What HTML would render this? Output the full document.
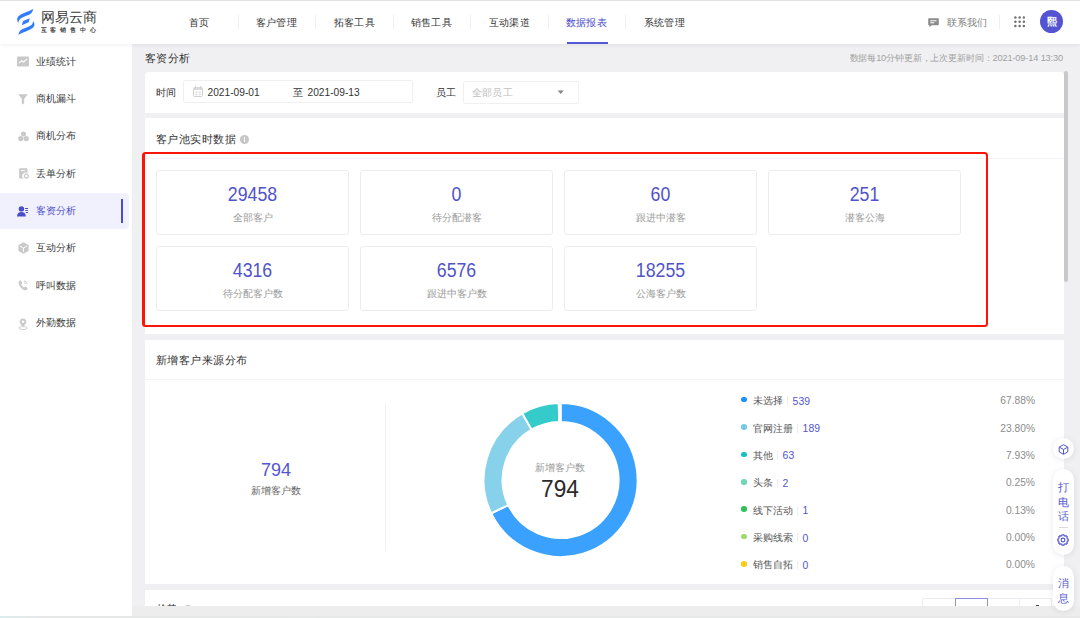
<!DOCTYPE html>
<html lang="zh">
<head>
<meta charset="utf-8">
<title>客资分析</title>
<style>
*{box-sizing:border-box;margin:0;padding:0}
html,body{width:1080px;height:618px;overflow:hidden;background:#f0f0f2}
body{position:relative;font-family:"Liberation Sans",sans-serif;font-size:10px;color:#333;-webkit-font-smoothing:antialiased}
.abs{position:absolute}
.t{position:absolute;white-space:nowrap;line-height:14px;height:14px}
.c{text-align:center}
.r{text-align:right}
/* header */
#hdr{position:absolute;left:0;top:0;width:1080px;height:43.5px;background:#fff;box-shadow:0 1px 4px rgba(0,0,0,.07);z-index:5}
#topline{position:absolute;left:0;top:0;width:1080px;height:1px;background:#e2e2e2;z-index:6}
.nav{position:absolute;top:15.9px;width:77px;text-align:center;font-size:10.2px;letter-spacing:.3px;color:#333;line-height:14px;white-space:nowrap}
.sep{position:absolute;top:15px;width:1px;height:14px;background:#f0f0f0}
/* sidebar */
#side{position:absolute;left:0;top:43px;width:132.2px;height:575px;background:#fff}
.si{position:absolute;left:36px;font-size:10.2px;letter-spacing:.1px;color:#3a3a3a;line-height:14px;white-space:nowrap}
/* panels */
.panel{position:absolute;left:144.6px;width:919.4px;background:#fff}
.card{position:absolute;width:193px;height:65px;border:1px solid #ededf0;border-radius:3px;background:#fff}
.num{position:absolute;left:0;width:100%;text-align:center;top:12.9px;font-size:19.3px;line-height:22px;color:#5053c9;transform:scaleX(.92)}
.lab{position:absolute;left:0;width:100%;text-align:center;top:39.5px;font-size:10.2px;line-height:13px;color:#9a9a9a;white-space:nowrap}
.lg{position:absolute;left:753px;font-size:9.6px;line-height:14px;color:#555;white-space:nowrap}
.lgn{position:absolute;margin-left:-.4px;font-size:10.4px;line-height:14px;color:#5356cf;white-space:nowrap}
.lgs{position:absolute;width:1px;height:9px;background:#eeeeee}
.dot{position:absolute;left:741.2px;width:5.6px;height:5.6px;border-radius:50%;margin-top:-.3px}
.pct{position:absolute;left:960px;width:75px;text-align:right;font-size:10.25px;line-height:14px;color:#8c8c8c;white-space:nowrap}
</style>
</head>
<body>

<!-- ================= SIDEBAR ================= -->
<div id="side">
  <div class="abs" style="left:0;top:150px;width:128.7px;height:36px;background:#f1f1fd;border-radius:0 4px 4px 0"></div>
  <div class="abs" style="left:120.7px;top:155.8px;width:2.1px;height:24px;background:#4a4cc9"></div>
  <!-- sidebar icons -->
  <svg class="abs" style="left:17px;top:13px" width="12" height="11" viewBox="0 0 12 11"><rect x="0" y="0.5" width="12" height="10" rx="1.3" fill="#c9c9c9"/><path d="M2 7.2L4.6 4.6L6.6 6L10 3.2" fill="none" stroke="#fff" stroke-width="1.1"/></svg>
  <svg class="abs" style="left:18px;top:51px" width="10" height="11" viewBox="0 0 10 11"><path d="M0.2 0.3H9.8L6.2 4.8V9.2L3.8 10.6V4.8Z" fill="#c9c9c9"/></svg>
  <svg class="abs" style="left:17.5px;top:88px" width="11" height="11" viewBox="0 0 11 11" fill="#c9c9c9"><circle cx="5.5" cy="2.9" r="2.5"/><circle cx="2.8" cy="7.6" r="2.6"/><circle cx="8.2" cy="7.6" r="2.6"/></svg>
  <svg class="abs" style="left:18.5px;top:124.8px" width="10" height="11" viewBox="0 0 10 11"><path d="M1 0.3H7.6A.8.8 0 0 1 8.4 1.1V5.2A3 3 0 0 0 4.6 10.6H1A.8.8 0 0 1 .2 9.8V1.1A.8.8 0 0 1 1 .3Z" fill="#c9c9c9"/><rect x="1.8" y="2.2" width="4.2" height="1" fill="#fff"/><circle cx="7.3" cy="8.1" r="2" fill="none" stroke="#c9c9c9" stroke-width="1.2"/></svg>
  <svg class="abs" style="left:17px;top:162.5px" width="11" height="11" viewBox="0 0 11 11" fill="#4a4cc9"><circle cx="4.4" cy="2.9" r="2.7"/><path d="M0 10.4C0 7.4 1.8 6 4.4 6S8.8 7.4 8.8 10.4Z"/><rect x="8" y="2" width="3" height="1"/><rect x="8.4" y="4" width="2.6" height="1"/><rect x="8.8" y="6" width="2.2" height="1"/></svg>
  <svg class="abs" style="left:17.5px;top:199px" width="11" height="12" viewBox="0 0 11 12"><path d="M5.5 0.3L10.6 3.1V8.9L5.5 11.7L0.4 8.9V3.1Z" fill="#c9c9c9"/><path d="M2 4L5.5 6L9 4M5.5 6V9.8" fill="none" stroke="#fff" stroke-width="1"/></svg>
  <svg class="abs" style="left:17.5px;top:236.5px" width="10" height="11" viewBox="0 0 10 11"><path d="M1.9 0.6C2.4 0.3 2.9 0.4 3.2 0.9L4.1 2.5C4.4 3 4.2 3.5 3.8 3.8L3.2 4.3C3.6 5.6 4.7 6.9 6 7.5L6.6 6.9C7 6.5 7.5 6.5 7.9 6.8L9.3 7.8C9.8 8.2 9.8 8.7 9.4 9.2C8.5 10.3 7.2 10.6 5.8 9.9C3.2 8.7 1.2 6 0.6 3.3C0.4 2.2 0.9 1.2 1.9 0.6Z" fill="#c9c9c9"/><path d="M6 0.9A3.3 3.3 0 0 1 9.2 4.1M6 2.7A1.5 1.5 0 0 1 7.5 4.1" fill="none" stroke="#c9c9c9" stroke-width=".9"/></svg>
  <svg class="abs" style="left:18px;top:274.5px" width="10" height="12" viewBox="0 0 10 12"><ellipse cx="5" cy="10" rx="4.2" ry="1.5" fill="none" stroke="#c9c9c9" stroke-width=".9"/><path d="M5 0.3A3.5 3.5 0 0 1 8.5 3.8C8.5 6 5 9.6 5 9.6S1.5 6 1.5 3.8A3.5 3.5 0 0 1 5 .3Z" fill="#c9c9c9" stroke="#fff" stroke-width=".5"/><circle cx="5" cy="3.8" r="1.3" fill="#fff"/></svg>
  <div class="si" style="top:12.1px">业绩统计</div>
  <div class="si" style="top:49.1px">商机漏斗</div>
  <div class="si" style="top:86.1px">商机分布</div>
  <div class="si" style="top:124.1px">丢单分析</div>
  <div class="si" style="top:161.1px;color:#4a4cc9">客资分析</div>
  <div class="si" style="top:198.1px">互动分析</div>
  <div class="si" style="top:236.1px">呼叫数据</div>
  <div class="si" style="top:273.1px">外勤数据</div>
</div>

<!-- ================= HEADER ================= -->
<div id="topline"></div>
<div id="hdr">
  <div class="nav" style="left:161px">首页</div>
  <div class="nav" style="left:238px">客户管理</div>
  <div class="nav" style="left:316px">拓客工具</div>
  <div class="nav" style="left:393px">销售工具</div>
  <div class="nav" style="left:471px">互动渠道</div>
  <div class="nav" style="left:548px;color:#4a4cc9">数据报表</div>
  <div class="nav" style="left:626px">系统管理</div>
  <div class="sep" style="left:238px"></div>
  <div class="sep" style="left:315px"></div>
  <div class="sep" style="left:393px"></div>
  <div class="sep" style="left:470px"></div>
  <div class="sep" style="left:548px"></div>
  <div class="sep" style="left:625px"></div>
  <div class="abs" style="left:567.2px;top:41.9px;width:40.4px;height:1.7px;background:#5558d6"></div>
  <!-- logo -->
  <svg class="abs" style="left:0;top:0" width="44" height="43" viewBox="0 0 44 43">
    <g fill="#2f7dff">
      <path d="M33.3 9.1C31 10.4 26 12.3 23.65 13.3C20.5 14.6 17.8 16 17.2 18.5C17 20.2 17.6 21.8 18.4 22.9C18.4 21 19.6 19.2 21.3 18C24 16.4 27.5 15.4 29.5 14.5C31.8 13.4 32.6 11.5 33.3 9.1Z"/>
      <path d="M33.3 9.1C31 10.4 26 12.3 23.65 13.3C20.5 14.6 17.8 16 17.2 18.5C17 20.2 17.6 21.8 18.4 22.9C18.4 21 19.6 19.2 21.3 18C24 16.4 27.5 15.4 29.5 14.5C31.8 13.4 32.6 11.5 33.3 9.1Z" transform="rotate(180 25.8 21.9)"/>
      <path d="M29.8 18.3L23.1 20.9L21.8 25.3L28.6 22.3Z"/>
    </g>
  </svg>
  <div class="abs" style="left:40.5px;top:8px;width:58px;height:18px;line-height:18px;font-size:14px;font-weight:500;color:#3a3a3a;white-space:nowrap;overflow:hidden">网易云商</div>
  <div class="abs" style="left:40.5px;top:26px;width:60px;height:8px;line-height:8px;font-size:6px;font-weight:bold;letter-spacing:3.9px;color:#444;white-space:nowrap;overflow:hidden">互客销售中心</div>
  <!-- header right -->
  <svg class="abs" style="left:927.5px;top:17.6px" width="11" height="10" viewBox="0 0 11 10"><path d="M1 .3h9a.8.8 0 0 1 .8.8v5.3a.8.8 0 0 1-.8.8H3.6L1.4 9.2V7.2H1a.8.8 0 0 1-.8-.8V1.1A.8.8 0 0 1 1 .3z" fill="#8c8c8c"/><rect x="2.3" y="2.3" width="6.2" height="1" fill="#fff"/><rect x="2.3" y="4.3" width="3.8" height="1" fill="#fff"/></svg>
  <div class="t" style="left:947px;top:16.3px;font-size:10.2px;letter-spacing:.15px;color:#7c7c7c">联系我们</div>
  <div class="sep" style="left:999px"></div>
  <svg class="abs" style="left:1014.2px;top:16.4px" width="11.3" height="11.3" viewBox="0 0 11.3 11.3" fill="#707070"><circle cx="1.4" cy="1.4" r="1.25"/><circle cx="5.65" cy="1.4" r="1.25"/><circle cx="9.9" cy="1.4" r="1.25"/><circle cx="1.4" cy="5.65" r="1.25"/><circle cx="5.65" cy="5.65" r="1.25"/><circle cx="9.9" cy="5.65" r="1.25"/><circle cx="1.4" cy="9.9" r="1.25"/><circle cx="5.65" cy="9.9" r="1.25"/><circle cx="9.9" cy="9.9" r="1.25"/></svg>
  <div class="abs" style="left:1039.8px;top:10.3px;width:23.2px;height:23.2px;border-radius:50%;background:#5454d2"></div>
  <div class="t c" style="left:1040px;width:23px;top:15.2px;font-size:10px;font-weight:bold;color:#fff">熙</div>
</div>

<!-- ================= MAIN ================= -->
<div class="t" style="left:145px;top:51.3px;font-size:11.4px;letter-spacing:.45px;color:#333">客资分析</div>
<div class="t r" style="left:760px;width:303px;top:51px;font-size:9.2px;letter-spacing:-.13px;color:#a0a0a0">数据每10分钟更新，上次更新时间：2021-09-14 13:30</div>

<!-- filter panel -->
<div class="panel" style="top:72px;height:41px;border-radius:4px 4px 0 0">
</div>
<div class="t" style="left:155.5px;top:85.8px;font-size:10.4px;color:#333">时间</div>
<div class="abs" style="left:183px;top:80px;width:230px;height:23px;border:1px solid #f0f0f1;border-radius:2px;background:#fff"></div>
<svg class="abs" style="left:193px;top:86px" width="10" height="11" viewBox="0 0 10 11"><rect x="0.5" y="1.6" width="9" height="8.9" rx="1" fill="#fff" stroke="#d2d2d2"/><rect x="0.5" y="1.6" width="9" height="2.4" fill="#dcdcdc"/><rect x="2" y="0" width="1" height="3" fill="#cfcfcf"/><rect x="7" y="0" width="1" height="3" fill="#cfcfcf"/><path d="M3.4 5v5M6.6 5v5" stroke="#e2e2e2" stroke-width=".8"/><path d="M1.8 6.2h6.4M1.8 8.3h6.4" stroke="#d6d6d6" stroke-width=".9" stroke-dasharray="1.2 1.4"/></svg>
<div class="t" style="left:207.5px;top:85.8px;font-size:10.2px;color:#333">2021-09-01</div>
<div class="t" style="left:293px;top:85.8px;font-size:10.2px;color:#333">至</div>
<div class="t" style="left:307.5px;top:85.8px;font-size:10.2px;color:#333">2021-09-13</div>
<div class="t" style="left:436px;top:85.8px;font-size:10.4px;color:#333">员工</div>
<div class="abs" style="left:463px;top:81px;width:116px;height:23px;border:1px solid #f0f0f1;border-radius:2px;background:#fff"></div>
<div class="t" style="left:472px;top:86.4px;font-size:9.8px;letter-spacing:.2px;color:#c0c0c0">全部员工</div>
<svg class="abs" style="left:556.5px;top:90px" width="8" height="5" viewBox="0 0 8 5"><path d="M0.6 0.5H6.8L3.7 4.1Z" fill="#858585"/></svg>

<!-- section 1 -->
<div class="panel" style="top:118px;height:215.5px"></div>
<div class="t" style="left:156px;top:132px;font-size:11.4px;letter-spacing:.45px;color:#333">客户池实时数据</div>
<div class="abs" style="left:239.8px;top:134.8px;width:8.9px;height:8.9px;border-radius:50%;background:#c6c6c6"></div>
<div class="abs" style="left:243.6px;top:137px;width:1.2px;height:4.6px;background:#fff"></div>
<div class="abs" style="left:145px;top:158px;width:919px;height:1px;background:#f3f3f5"></div>

<div class="card" style="left:156px;top:170px"><div class="num">29458</div><div class="lab">全部客户</div></div>
<div class="card" style="left:360px;top:170px"><div class="num">0</div><div class="lab">待分配潜客</div></div>
<div class="card" style="left:564px;top:170px"><div class="num">60</div><div class="lab">跟进中潜客</div></div>
<div class="card" style="left:768px;top:170px"><div class="num">251</div><div class="lab">潜客公海</div></div>
<div class="card" style="left:156px;top:246px"><div class="num">4316</div><div class="lab">待分配客户数</div></div>
<div class="card" style="left:360px;top:246px"><div class="num">6576</div><div class="lab">跟进中客户数</div></div>
<div class="card" style="left:564px;top:246px"><div class="num">18255</div><div class="lab">公海客户数</div></div>

<!-- red highlight box -->
<div class="abs" style="left:142px;top:151.8px;width:846px;height:175.2px;border:2.2px solid #fb1409;border-left-width:3px;border-radius:3.5px"></div>

<!-- section 2 -->
<div class="panel" style="top:340px;height:244.2px"></div>
<div class="t" style="left:156px;top:353px;font-size:11.4px;letter-spacing:.45px;color:#333">新增客户来源分布</div>
<div class="abs" style="left:145px;top:379px;width:919px;height:1px;background:#f3f3f5"></div>

<!-- left stat -->
<div class="t c" style="left:216px;width:120px;top:459px;font-size:18px;line-height:22px;height:22px;color:#5356cf">794</div>
<div class="t c" style="left:216px;width:120px;top:484px;font-size:10px;color:#666">新增客户数</div>
<div class="abs" style="left:384.5px;top:404px;width:1px;height:147px;background:#f0f0f0"></div>
<!-- donut -->
<svg class="abs" style="left:0;top:0" width="1080" height="618" viewBox="0 0 1080 618"><g stroke="#fff" stroke-width="2" stroke-linejoin="round"><path d="M560.60 403.00A77 77 0 1 1 491.17 513.29L508.30 505.08A58 58 0 1 0 560.60 422.00Z" fill="#3aa1ff"/><path d="M491.17 513.29A77 77 0 0 1 522.19 413.27L531.67 429.73A58 58 0 0 0 508.30 505.08Z" fill="#88d1ea"/><path d="M522.19 413.27A77 77 0 0 1 558.77 403.02L559.22 422.02A58 58 0 0 0 531.67 429.73Z" fill="#36cbcb"/><path d="M558.77 403.02A77 77 0 0 1 559.99 403.00L560.14 422.00A58 58 0 0 0 559.22 422.02Z" fill="#82dfc0"/><path d="M559.99 403.00A77 77 0 0 1 560.60 403.00L560.60 422.00A58 58 0 0 0 560.14 422.00Z" fill="#4ecb73"/></g></svg>
<div class="t c" style="left:500px;width:120px;top:461px;font-size:10px;color:#999">新增客户数</div>
<div class="t c" style="left:500px;width:120px;top:474.8px;font-size:24.4px;line-height:28px;height:28px;color:#2b2b2b;transform:scaleX(.93)">794</div>
<!-- legend -->
<div class="dot" style="top:397.2px;background:#1890ff"></div>
<div class="lg" style="top:394.3px">未选择</div>
<div class="lgs" style="left:787px;top:396.4px"></div>
<div class="lgn" style="left:793px;top:394.7px">539</div>
<div class="pct" style="top:394.3px">67.88%</div>
<div class="dot" style="top:424.6px;background:#73c9e6"></div>
<div class="lg" style="top:421.7px">官网注册</div>
<div class="lgs" style="left:797px;top:423.8px"></div>
<div class="lgn" style="left:803px;top:422.1px">189</div>
<div class="pct" style="top:421.7px">23.80%</div>
<div class="dot" style="top:451.9px;background:#13c2c2"></div>
<div class="lg" style="top:449.0px">其他</div>
<div class="lgs" style="left:777px;top:451.1px"></div>
<div class="lgn" style="left:783px;top:449.4px">63</div>
<div class="pct" style="top:449.0px">7.93%</div>
<div class="dot" style="top:479.3px;background:#6cd9b3"></div>
<div class="lg" style="top:476.4px">头条</div>
<div class="lgs" style="left:777px;top:478.5px"></div>
<div class="lgn" style="left:783px;top:476.8px">2</div>
<div class="pct" style="top:476.4px">0.25%</div>
<div class="dot" style="top:506.6px;background:#2fc25b"></div>
<div class="lg" style="top:503.7px">线下活动</div>
<div class="lgs" style="left:797px;top:505.8px"></div>
<div class="lgn" style="left:803px;top:504.1px">1</div>
<div class="pct" style="top:503.7px">0.13%</div>
<div class="dot" style="top:534.0px;background:#9dd96c"></div>
<div class="lg" style="top:531.1px">采购线索</div>
<div class="lgs" style="left:797px;top:533.2px"></div>
<div class="lgn" style="left:803px;top:531.5px">0</div>
<div class="pct" style="top:531.1px">0.00%</div>
<div class="dot" style="top:561.3px;background:#facc14"></div>
<div class="lg" style="top:558.4px">销售自拓</div>
<div class="lgs" style="left:797px;top:560.5px"></div>
<div class="lgn" style="left:803px;top:558.8px">0</div>
<div class="pct" style="top:558.4px">0.00%</div>

<!-- section 3 (cut) -->
<div class="panel" style="top:589.7px;height:16.7px;overflow:hidden">
  <div class="t" style="left:11px;top:12.3px;font-size:11.4px;letter-spacing:.45px;color:#333">趋势</div>
  <div class="abs" style="left:39px;top:15px;width:8.9px;height:8.9px;border-radius:50%;background:#c6c6c6"></div>
</div>
<div class="abs" style="left:922px;top:598px;width:130px;height:12px;border:1px solid #ececf0;border-bottom:0;border-radius:2px 2px 0 0;background:#fff"></div>
<div class="abs" style="left:987px;top:598px;width:1px;height:10px;background:#ececf0"></div>
<div class="abs" style="left:1019px;top:598px;width:1px;height:10px;background:#ececf0"></div>
<div class="abs" style="left:954.5px;top:598px;width:33.5px;height:12px;border:1px solid #8e90e4;border-bottom:0"></div>

<!-- bottom strip -->
<div class="abs" style="left:132.2px;top:606.4px;width:947.8px;height:11.6px;background:#ededee"></div>
<div class="abs" style="left:1036.3px;top:605.2px;width:3.2px;height:1.2px;background:#444"></div>
<div class="abs" style="left:0;top:616px;width:1080px;height:2px;background:linear-gradient(90deg,#dcecec 0,#e6e8e8 40px,#e8e8e8 100%);z-index:7"></div>

<!-- scrollbar -->
<div class="abs" style="left:1064.3px;top:70.5px;width:4.2px;height:211px;border-radius:2px;background:#c8c8c8"></div>
<!-- floating buttons -->
<div class="abs" style="left:1052.9px;top:438.4px;width:20.9px;height:20.9px;border-radius:50%;background:#fff;box-shadow:0 1px 6px rgba(0,0,0,.09);z-index:8"></div>
<svg class="abs" style="left:1058px;top:443.8px;z-index:9" width="11" height="11" viewBox="0 0 11 11" fill="none" stroke="#5356cf" stroke-width="1" stroke-linejoin="round"><path d="M5.5 0.7L9.8 3.1V7.9L5.5 10.3L1.2 7.9V3.1Z"/><path d="M1.4 3.2L5.5 5.5L9.6 3.2M5.5 5.5V10.1"/></svg>
<div class="abs" style="left:1052.9px;top:469.3px;width:20.9px;height:86px;border-radius:10.5px;background:#fff;box-shadow:0 1px 6px rgba(0,0,0,.09);z-index:8"></div>
<div class="t c" style="left:1053.5px;width:20px;top:479.5px;font-size:10.6px;color:#5356cf;z-index:9">打</div>
<div class="t c" style="left:1053.5px;width:20px;top:494.5px;font-size:10.6px;color:#5356cf;z-index:9">电</div>
<div class="t c" style="left:1053.5px;width:20px;top:509px;font-size:10.6px;color:#5356cf;z-index:9">话</div>
<div class="abs" style="left:1058.8px;top:527.2px;width:9px;height:1px;background:#dcdcdc;z-index:9"></div>
<svg class="abs" style="left:1057.3px;top:534px;z-index:9" width="12" height="12" viewBox="0 0 12 12" fill="none" stroke="#5356cf" stroke-width="1.15" stroke-linejoin="round"><path d="M11.21 5.01L11.21 6.99L10.38 7.05L9.84 8.35L10.38 8.98L8.98 10.38L8.35 9.84L7.05 10.38L6.99 11.21L5.01 11.21L4.95 10.38L3.65 9.84L3.02 10.38L1.62 8.98L2.16 8.35L1.62 7.05L0.79 6.99L0.79 5.01L1.62 4.95L2.16 3.65L1.62 3.02L3.02 1.62L3.65 2.16L4.95 1.62L5.01 0.79L6.99 0.79L7.05 1.62L8.35 2.16L8.98 1.62L10.38 3.02L9.84 3.65L10.38 4.95Z"/><circle cx="6" cy="6" r="1.9"/></svg>
<div class="abs" style="left:1052.9px;top:565.8px;width:20.9px;height:45.5px;border-radius:10.5px;background:#fff;box-shadow:0 1px 6px rgba(0,0,0,.09);z-index:8"></div>
<div class="t c" style="left:1053.5px;width:20px;top:576.2px;font-size:10.6px;color:#5356cf;z-index:9">消</div>
<div class="t c" style="left:1053.5px;width:20px;top:590.7px;font-size:10.6px;color:#5356cf;z-index:9">息</div>

</body>
</html>
